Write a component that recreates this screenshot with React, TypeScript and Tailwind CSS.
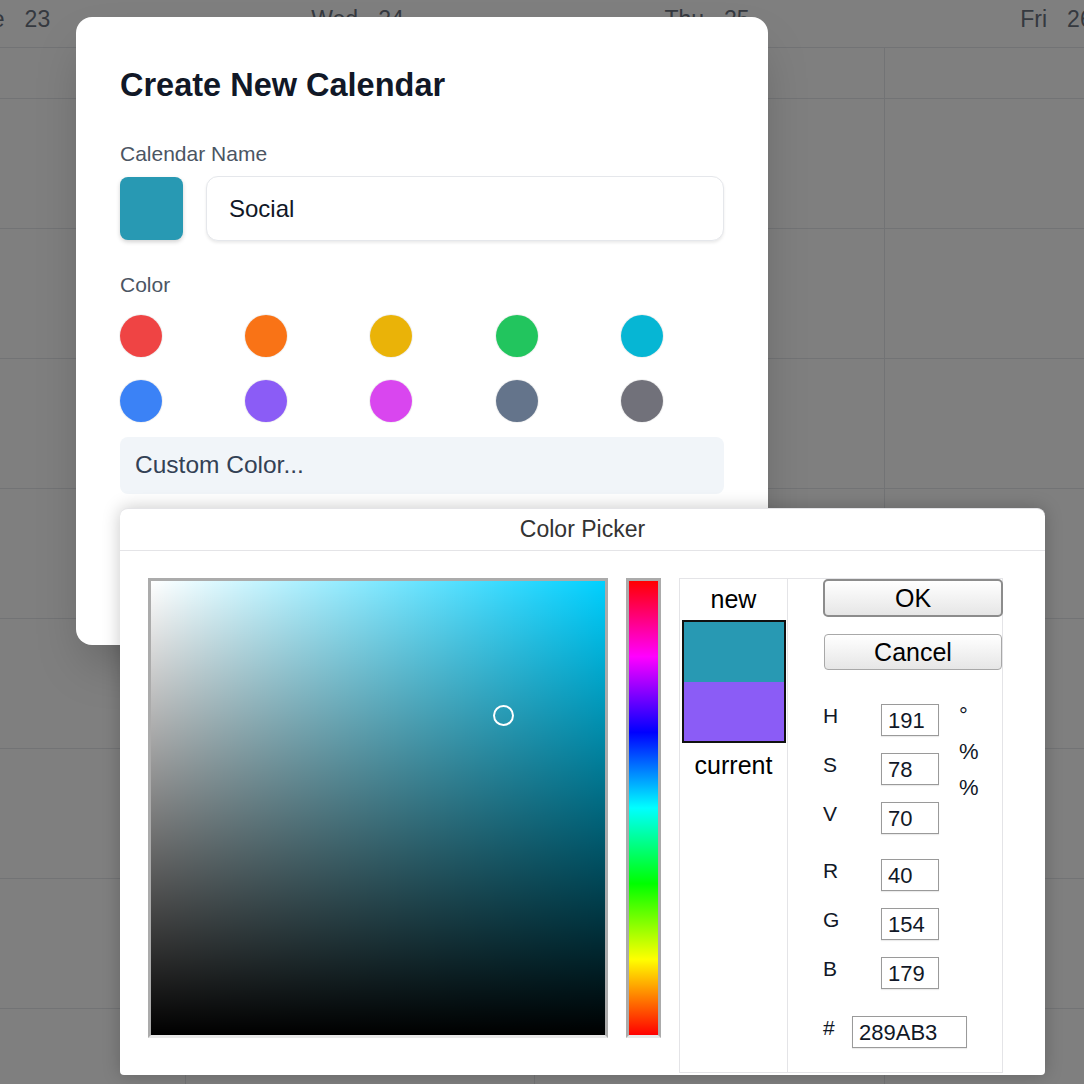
import React from 'react'

const days = [
  { name: 'Tue', num: '23', width: 'w-[350px]' },
  { name: 'Wed', num: '24', width: 'w-[349px]' },
  { name: 'Thu', num: '25', width: 'w-[350px]' },
  { name: 'Fri', num: '26', width: 'w-[349px]' },
]

const swatches = [
  'bg-[#ef4444]',
  'bg-[#f97316]',
  'bg-[#eab308]',
  'bg-[#22c55e]',
  'bg-[#06b6d4]',
  'bg-[#3b82f6]',
  'bg-[#8b5cf6]',
  'bg-[#d946ef]',
  'bg-[#64748b]',
  'bg-[#71717a]',
]

function WeekGrid() {
  return (
    <div className="ml-[-165px] w-[1400px]">
      <div className="flex h-[48px] border-b border-[#e5e7eb]">
        {days.map((d) => (
          <div
            key={d.name}
            className={`${d.width} flex shrink-0 justify-center gap-[20px] pr-[4px] pt-[6px] text-[23px] leading-[26px] text-[#6b7280]`}
          >
            <span>{d.name}</span>
            <span>{d.num}</span>
          </div>
        ))}
      </div>
      <div className="flex">
        {days.map((d, i) => (
          <div
            key={d.name}
            className={`${d.width} shrink-0 ${i > 0 ? 'border-l border-[#e5e7eb]' : ''}`}
          >
            <div className="h-[51px] border-b border-[#e5e7eb]" />
            {Array.from({ length: 8 }).map((_, r) => (
              <div key={r} className="h-[130px] border-b border-[#e5e7eb]" />
            ))}
          </div>
        ))}
      </div>
    </div>
  )
}

function CreateCalendarModal() {
  return (
    <div className="absolute left-[76px] top-[17px] h-[628px] w-[692px] rounded-[16px] bg-white px-[44px] pt-[48px] shadow-2xl">
      <h2 className="text-[32.5px] font-bold leading-[40px] text-[#111827]">Create New Calendar</h2>

      <div className="mt-[35px] text-[21px] leading-[28px] text-[#4b5563]">Calendar Name</div>
      <div className="mt-[8px] flex items-center gap-[23px]">
        <div className="h-[63px] w-[63px] shrink-0 rounded-[8px] bg-[#2899b3] shadow-[0_2px_4px_rgba(0,0,0,0.18)]" />
        <input
          readOnly
          value="Social"
          className="h-[65px] flex-1 rounded-[12px] border border-[#e5e7eb] bg-white px-[22px] text-[24px] text-[#111827] shadow-[0_2px_3px_rgba(0,0,0,0.08)] outline-none"
        />
      </div>

      <div className="mt-[30px] text-[21px] leading-[28px] text-[#4b5563]">Color</div>
      <div className="mt-[16px] grid grid-cols-5 gap-x-[22px] gap-y-[23px]">
        {swatches.map((c) => (
          <div key={c} className="flex">
            <div className={`${c} h-[42px] w-[42px] rounded-full shadow-[0_0_0_1px_rgba(0,0,0,0.06)]`} />
          </div>
        ))}
      </div>

      <div className="mt-[15px] flex h-[57px] items-center rounded-[8px] bg-[#f1f5f9] px-[15px] text-[24.5px] text-[#334155]">
        Custom Color...
      </div>
    </div>
  )
}

function Field({ label, value, className }: { label: string; value: string; className?: string }) {
  return (
    <div className={`flex items-start ${className ?? ''}`}>
      <span className="w-[58px] shrink-0 text-[21px] leading-[24px] text-[#111827]">{label}</span>
      <div className="flex h-[32px] w-[58px] items-center border border-[#9a9a9a] bg-white pl-[6px] text-[22px] text-[#111827] shadow-[0_1px_1px_rgba(0,0,0,0.08)]">
        {value}
      </div>
    </div>
  )
}

function ColorPicker() {
  return (
    <div className="absolute left-[120px] top-[508px] flex h-[567px] w-[925px] flex-col rounded-b-[4px] rounded-t-[8px] border-t border-[#e4e4e7] bg-white shadow-[0_0_18px_rgba(0,0,0,0.22)]">
      <div className="flex h-[42px] items-center justify-center border-b border-[#e4e4e7] text-[23px] text-[#333333]">
        Color Picker
      </div>

      <div className="flex flex-1 items-start pb-[2px] pl-[28px] pt-[27px]">
        {/* saturation / value area */}
        <div className="relative h-[460px] w-[460px] shrink-0 border-[3px] border-[#ababab] border-b-[#e8e8e8] bg-[#00d0ff]">
          <div className="absolute inset-0 bg-[linear-gradient(to_right,#ffffff,rgba(255,255,255,0))]" />
          <div className="absolute inset-0 bg-[linear-gradient(to_top,#000000,rgba(0,0,0,0))]" />
          <div className="absolute left-[342px] top-[124px] h-[21px] w-[21px] rounded-full border-2 border-white" />
        </div>

        {/* hue strip */}
        <div className="ml-[18px] h-[460px] w-[35px] shrink-0 border-[3px] border-[#ababab] border-b-[#e8e8e8] bg-[linear-gradient(to_bottom,#ff0000,#ff00ff,#0000ff,#00ffff,#00ff00,#ffff00,#ff0000)]" />

        {/* new / current */}
        <div className="ml-[18px] flex h-[495px] w-[109px] shrink-0 flex-col items-center border border-[#e4e4e7]">
          <div className="text-[25px] leading-[41px] text-black">new</div>
          <div className="flex h-[123px] w-[104px] flex-col border-2 border-[#111111]">
            <div className="flex-1 bg-[#2899b3]" />
            <div className="flex-1 bg-[#8b5cf6]" />
          </div>
          <div className="text-[25px] leading-[44px] text-black">current</div>
        </div>

        {/* controls */}
        <div className="flex h-[495px] w-[215px] shrink-0 flex-col border border-l-0 border-[#e4e4e7] pl-[35px]">
          <button className="h-[38px] w-[180px] rounded-[5px] border-2 border-[#8c8c8c] bg-[linear-gradient(to_bottom,#ffffff,#e6e6e6)] text-[25px] leading-none text-black">
            OK
          </button>
          <button className="ml-[1px] mt-[17px] h-[36px] w-[178px] rounded-[4px] border border-[#a8a8a8] bg-[linear-gradient(to_bottom,#ffffff,#e6e6e6)] text-[25px] leading-none text-black">
            Cancel
          </button>

          <div className="mt-[34px] flex items-start">
            <div className="flex flex-col">
              <Field label="H" value="191" />
              <Field label="S" value="78" className="mt-[17px]" />
              <Field label="V" value="70" className="mt-[17px]" />
            </div>
            <div className="ml-[20px] mt-[-6px] flex flex-col text-[22px] leading-[36px] text-[#111827]">
              <span>°</span>
              <span>%</span>
              <span>%</span>
            </div>
          </div>

          <Field label="R" value="40" className="mt-[25px]" />
          <Field label="G" value="154" className="mt-[17px]" />
          <Field label="B" value="179" className="mt-[17px]" />

          <div className="mt-[27px] flex items-start">
            <span className="w-[29px] shrink-0 text-[21px] leading-[24px] text-[#111827]">#</span>
            <div className="flex h-[32px] w-[115px] items-center border border-[#9a9a9a] bg-white pl-[6px] text-[22px] text-[#111827] shadow-[0_1px_1px_rgba(0,0,0,0.08)]">
              289AB3
            </div>
          </div>
        </div>
      </div>
    </div>
  )
}

export default function App() {
  return (
    <div className="relative h-[1084px] w-[1084px] overflow-hidden bg-white font-['Liberation_Sans',Arial,sans-serif]">
      <WeekGrid />
      <div className="absolute inset-0 bg-black/50" />
      <CreateCalendarModal />
      <ColorPicker />
    </div>
  )
}
